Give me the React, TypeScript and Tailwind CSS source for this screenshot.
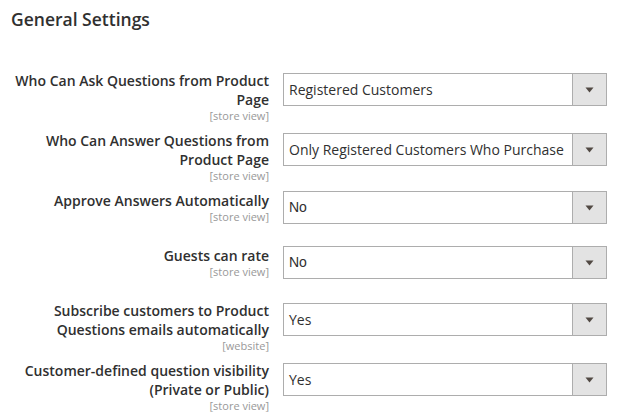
import React from 'react';

type Field = {
  label: string[];
  scope: string;
  value: string;
  arial?: boolean;
  h: string;
};

const fields: Field[] = [
  { label: ['Who Can Ask Questions from Product', 'Page'], scope: '[store view]', value: 'Registered Customers', h: 'h-[60px]' },
  { label: ['Who Can Answer Questions from', 'Product Page'], scope: '[store view]', value: 'Only Registered Customers Who Purchase', h: 'h-[58px]' },
  { label: ['Approve Answers Automatically'], scope: '[store view]', value: 'No', arial: true, h: 'h-[55px]' },
  { label: ['Guests can rate'], scope: '[store view]', value: 'No', arial: true, h: 'h-[57px]' },
  { label: ['Subscribe customers to Product', 'Questions emails automatically'], scope: '[website]', value: 'Yes', h: 'h-[60px]' },
  { label: ['Customer-defined question visibility', '(Private or Public)'], scope: '[store view]', value: 'Yes', h: 'h-[60px]' },
];

const Select = ({ value, arial }: { value: string; arial?: boolean }) => (
  <div className="flex h-[33px] w-[324px] border border-[#adadad] bg-white">
    <div
      className={
        arial
          ? "flex flex-1 items-center pl-[5px] font-['Liberation_Sans',sans-serif] text-[14px] text-[#303030]"
          : "flex flex-1 items-center pl-[5px] font-['Open_Sans',sans-serif] text-[14px] text-[#303030]"
      }
    >
      {value}
    </div>
    <div className="flex w-[34px] items-center justify-center border-l border-[#adadad] bg-[#e3e3e3]">
      <svg width="9" height="6" viewBox="0 0 9 6">
        <path d="M0.5 0.5 H8.5 L4.5 5.5 Z" fill="#514943" />
      </svg>
    </div>
  </div>
);

export default function App() {
  return (
    <div className="h-[417px] w-[641px] overflow-hidden bg-white font-['Open_Sans',sans-serif]">
      <h2 className="pl-[11px] pt-[7px] text-[17.5px] font-semibold leading-[24px] text-[#303030]">
        General Settings
      </h2>
      <div className="mt-[42px] flex flex-col">
        {fields.map((f) => (
          <div key={f.value + f.label[0]} className={`flex items-start ${f.h}`}>
            <div
              className={
                f.label.length === 1
                  ? 'flex w-[269px] flex-col items-end text-right'
                  : '-mt-[2px] flex w-[269px] flex-col items-end text-right'
              }
            >
              {f.label.map((l) => (
                <span key={l} className="text-[14px] font-semibold leading-[19px] text-[#303030]">
                  {l}
                </span>
              ))}
              <span className="text-[11px] leading-[14px] text-[#999999]">{f.scope}</span>
            </div>
            <div className="ml-[14px]">
              <Select value={f.value} arial={f.arial} />
            </div>
          </div>
        ))}
      </div>
    </div>
  );
}
